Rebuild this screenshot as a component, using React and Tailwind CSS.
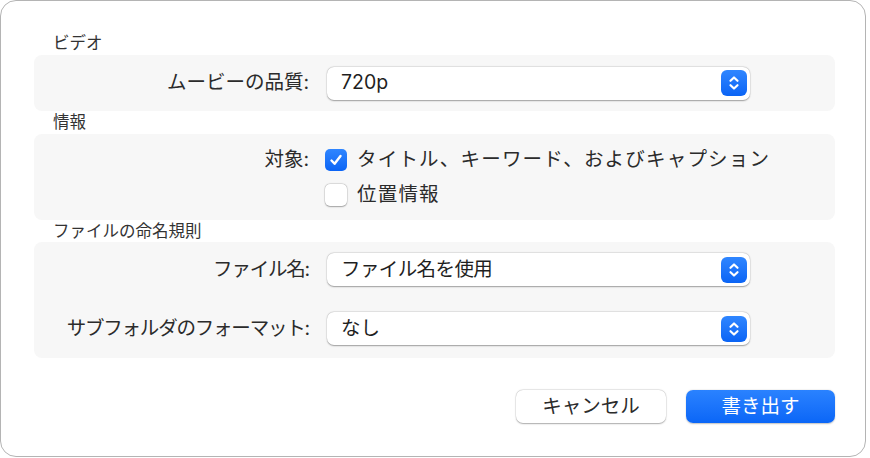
import React from 'react';

const font = { fontFamily: "Inter, 'Noto Sans CJK JP', sans-serif" };

const Stepper = () => (
  <div className="w-[26px] h-[26px] rounded-[6px] bg-gradient-to-b from-[#2f86ff] to-[#0a64f5] flex items-center justify-center">
    <svg width="14" height="18" viewBox="0 0 14 18" fill="none" stroke="white" strokeWidth="2.2" strokeLinecap="round" strokeLinejoin="round">
      <path d="M3.5 6.8 L7 3.5 L10.5 6.8" />
      <path d="M3.5 11.2 L7 14.5 L10.5 11.2" />
    </svg>
  </div>
);

const Popup = ({ value, tight }) => (
  <div className="w-[423px] h-[33px] rounded-[7px] bg-white shadow-[0_0.5px_1.5px_rgba(0,0,0,0.35),0_0_0_0.5px_rgba(0,0,0,0.06)] flex items-center justify-between pl-[14px] pr-[3px]">
    <span className={tight ? 'text-[19.5px] text-[#1f1f1f] tracking-[-0.6px]' : 'text-[19.5px] text-[#1f1f1f]'}>{value}</span>
    <Stepper />
  </div>
);

const Label = ({ children, tight }) => (
  <div className={tight ? 'w-[277px] text-right pr-[2px] text-[19.5px] text-[#2b2b2b] tracking-[-1.2px]' : 'w-[277px] text-right pr-[2px] text-[19.5px] text-[#2b2b2b]'}>
    {children}
  </div>
);

const Heading = ({ children }) => (
  <div className="h-[22px] flex items-center pl-[19px] text-[16.5px] text-[#333333]">{children}</div>
);

const Checkbox = ({ checked }) =>
  checked ? (
    <div className="w-[22px] h-[22px] rounded-[5px] bg-gradient-to-b from-[#2f86ff] to-[#0a64f5] flex items-center justify-center">
      <svg width="14" height="14" viewBox="0 0 14 14" fill="none" stroke="white" strokeWidth="2.4" strokeLinecap="round" strokeLinejoin="round">
        <path d="M2.5 7.5 L5.6 10.8 L11.5 3" />
      </svg>
    </div>
  ) : (
    <div className="w-[22px] h-[22px] rounded-[5px] bg-white shadow-[0_0.5px_1.5px_rgba(0,0,0,0.3),0_0_0_0.5px_rgba(0,0,0,0.12)]" />
  );

export default function App() {
  return (
    <div className="w-[870px] h-[458px] bg-white" style={font}>
      <div className="w-[866px] h-[457px] rounded-[16px] border border-[#b4b4b4] pt-[31px] pl-[33px] pr-[30px] flex flex-col">
        <Heading>ビデオ</Heading>
        <div className="h-[56px] mt-px rounded-[8px] bg-[#f7f7f7] flex items-center">
          <Label>ムービーの品質:</Label>
          <div className="ml-[16px]">
            <Popup value="720p" />
          </div>
        </div>

        <Heading>情報</Heading>
        <div className="h-[86px] mt-px rounded-[8px] bg-[#f7f7f7] py-[8px] flex flex-col">
          <div className="h-[35px] flex items-center">
            <Label>対象:</Label>
            <div className="ml-[14px] flex items-center gap-[10px]">
              <Checkbox checked />
              <span className="text-[19.5px] text-[#2b2b2b] tracking-[1.2px]">タイトル、キーワード、およびキャプション</span>
            </div>
          </div>
          <div className="h-[35px] flex items-center">
            <div className="w-[277px]" />
            <div className="ml-[14px] flex items-center gap-[10px]">
              <Checkbox />
              <span className="text-[19.5px] text-[#2b2b2b] tracking-[1.2px]">位置情報</span>
            </div>
          </div>
        </div>

        <Heading>ファイルの命名規則</Heading>
        <div className="h-[116px] rounded-[8px] bg-[#f7f7f7] pt-[11px] flex flex-col gap-[26px]">
          <div className="flex items-center">
            <Label tight>ファイル名:</Label>
            <div className="ml-[16px]">
              <Popup value="ファイル名を使用" tight />
            </div>
          </div>
          <div className="flex items-center">
            <Label tight>サブフォルダのフォーマット:</Label>
            <div className="ml-[16px]">
              <Popup value="なし" />
            </div>
          </div>
        </div>

        <div className="mt-[32px] flex justify-end gap-[20px]">
          <button className="w-[150px] h-[33px] rounded-[7px] bg-white shadow-[0_0.5px_1.5px_rgba(0,0,0,0.3),0_0_0_0.5px_rgba(0,0,0,0.08)] text-[19.5px] text-[#2b2b2b]">
            キャンセル
          </button>
          <button className="w-[149px] h-[33px] rounded-[7px] bg-gradient-to-b from-[#2a82ff] to-[#0a66f7] shadow-[0_0.5px_1.5px_rgba(0,0,0,0.25)] text-[19.5px] text-white">
            書き出す
          </button>
        </div>
      </div>
    </div>
  );
}
